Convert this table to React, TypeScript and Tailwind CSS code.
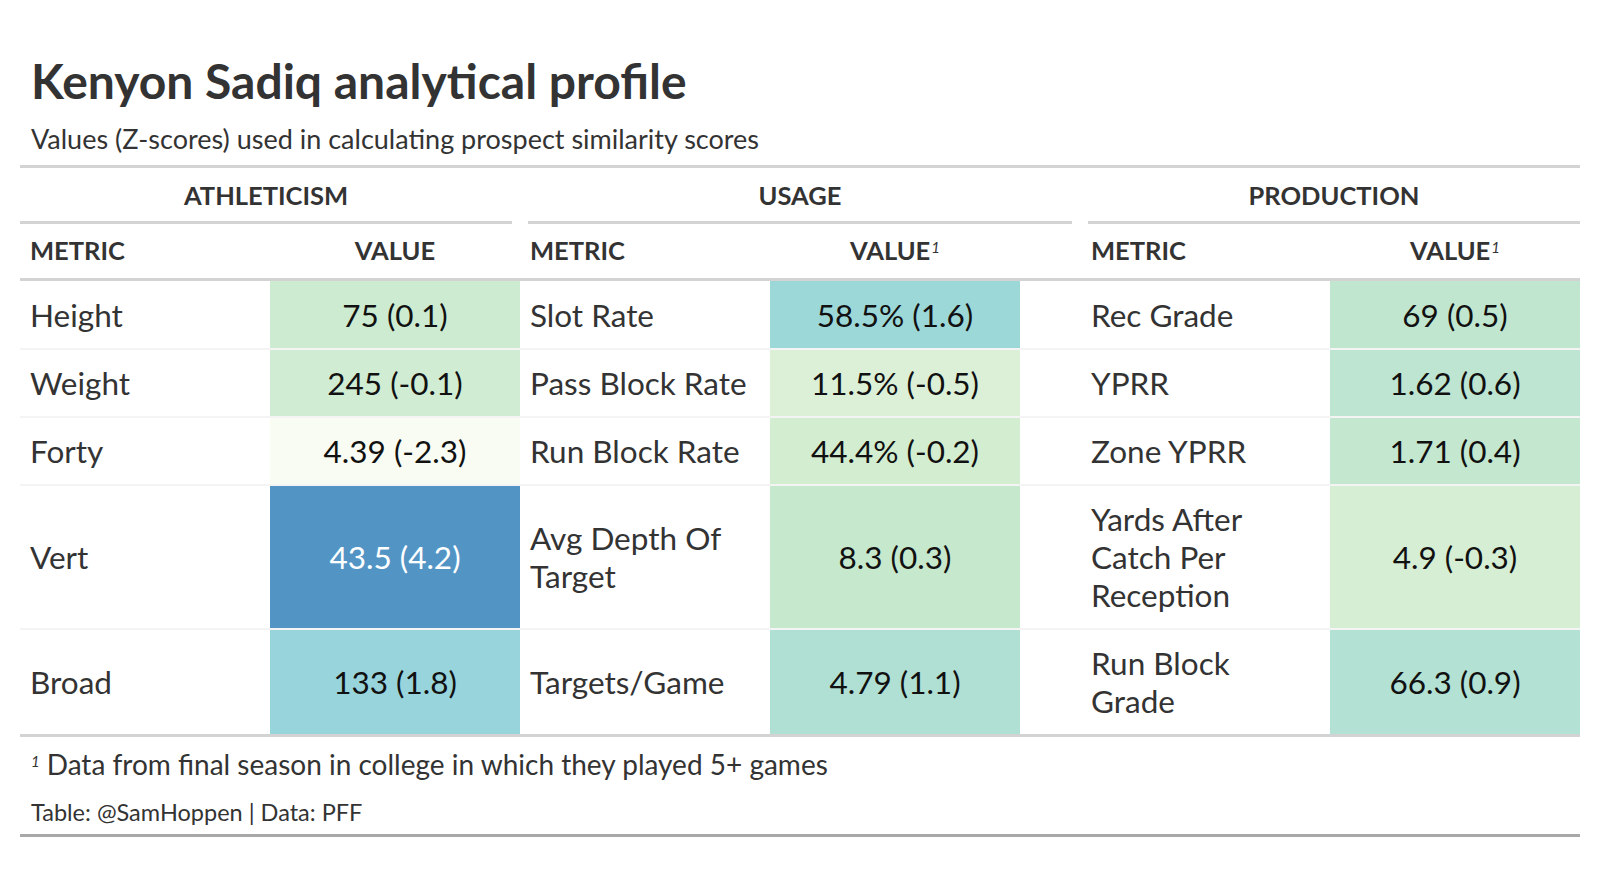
const rows = [
  {
    first: true,
    m1: "Height", v1: "75 (0.1)", c1: "bg-[#cdebd0]",
    m2: "Slot Rate", v2: "58.5% (1.6)", c2: "bg-[#9dd8d8]",
    m3: "Rec Grade", v3: "69 (0.5)", c3: "bg-[#c1e6d0]",
  },
  {
    first: false,
    m1: "Weight", v1: "245 (-0.1)", c1: "bg-[#d0ecd3]",
    m2: "Pass Block Rate", v2: "11.5% (-0.5)", c2: "bg-[#dcf0d8]",
    m3: "YPRR", v3: "1.62 (0.6)", c3: "bg-[#bde5d1]",
  },
  {
    first: false,
    m1: "Forty", v1: "4.39 (-2.3)", c1: "bg-[#f8fcf2]",
    m2: "Run Block Rate", v2: "44.4% (-0.2)", c2: "bg-[#d3edd0]",
    m3: "Zone YPRR", v3: "1.71 (0.4)", c3: "bg-[#c4e7cf]",
  },
  {
    first: false,
    m1: "Vert", v1: "43.5 (4.2)", c1: "bg-[#5295c5] !text-white",
    m2: "Avg Depth Of Target", v2: "8.3 (0.3)", c2: "bg-[#c6e8cd]",
    m3: "Yards After Catch Per Reception", v3: "4.9 (-0.3)", c3: "bg-[#d6eed4]",
  },
  {
    first: false,
    m1: "Broad", v1: "133 (1.8)", c1: "bg-[#98d4dc]",
    m2: "Targets/Game", v2: "4.79 (1.1)", c2: "bg-[#b0e0d3]",
    m3: "Run Block Grade", v3: "66.3 (0.9)", c3: "bg-[#b3e1d3]",
  },
];

function Sup() {
  return <sup className="text-[15px] italic font-normal ml-[1px] relative -top-[7px]">1</sup>;
}

export default function App() {
  const cols = "grid grid-cols-[250px_250px_250px_250px_310px_250px]";
  const valueCell = "px-[10px] flex items-center justify-center text-center text-[#111111]";
  return (
    <div className="w-[1600px] h-[874px] bg-white text-[#333333] font-['Lato','Liberation_Sans',sans-serif]">
      <div className="pt-[52px] px-[20px]">
        <div className="pl-[11px]">
          <h1 className="text-[48px] font-bold leading-[58px]">Kenyon Sadiq analytical profile</h1>
          <p className="text-[27px] leading-[32px] mt-[13px]">Values (Z-scores) used in calculating prospect similarity scores</p>
        </div>

        <div className="mt-[10px] border-t-[3px] border-[#d3d3d3]">
          {/* spanners */}
          <div className="grid grid-cols-[500px_560px_500px] text-[25.5px] font-bold uppercase leading-[28px]">
            <div className="pr-[8px]">
              <div className="text-center pt-[13px] pb-[12px] border-b-[3px] border-[#d3d3d3]">Athleticism</div>
            </div>
            <div className="px-[8px]">
              <div className="text-center pt-[13px] pb-[12px] border-b-[3px] border-[#d3d3d3]">Usage</div>
            </div>
            <div className="pl-[8px]">
              <div className="text-center pt-[13px] pb-[12px] border-b-[3px] border-[#d3d3d3]">Production</div>
            </div>
          </div>

          {/* column labels */}
          <div className={`${cols} text-[25.5px] font-bold uppercase leading-[28px] border-b-[3px] border-[#d3d3d3]`}>
            <div className="px-[10px] pt-[12px] pb-[14px]">Metric</div>
            <div className="px-[10px] pt-[12px] pb-[14px] text-center">Value</div>
            <div className="px-[10px] pt-[12px] pb-[14px]">Metric</div>
            <div className="px-[10px] pt-[12px] pb-[14px] text-center">Value<Sup /></div>
            <div className="pl-[71px] pr-[10px] pt-[12px] pb-[14px]">Metric</div>
            <div className="px-[10px] pt-[12px] pb-[14px] text-center">Value<Sup /></div>
          </div>

          {/* body */}
          {rows.map((r) => {
            const pad = r.first ? "pt-[15px] pb-[14px]" : "py-[14px]";
            return (
              <div key={r.m1} className={`${cols} text-[31.5px] leading-[38px] border-[#f4f4f4] ${r.first ? "" : "border-t-2"}`}>
                <div className={`px-[10px] flex items-center ${pad}`}>{r.m1}</div>
                <div className={`${valueCell} ${r.c1}`}>{r.v1}</div>
                <div className={`px-[10px] flex items-center ${pad}`}>{r.m2}</div>
                <div className={`${valueCell} ${r.c2}`}>{r.v2}</div>
                <div className={`pl-[71px] pr-[10px] flex items-center ${pad}`}>
                  <div className="max-w-[200px]">{r.m3}</div>
                </div>
                <div className={`${valueCell} ${r.c3}`}>{r.v3}</div>
              </div>
            );
          })}
        </div>

        <div className="border-t-[3px] border-[#d3d3d3] border-b-[3px] border-b-[#a8a8a8] pl-[11px] pb-[8px]">
          <p className="text-[28px] leading-[34px] mt-[10px]">
            <sup className="text-[15px] italic relative -top-[8px] mr-[7px]">1</sup>Data from final season in college in which they played 5+ games
          </p>
          <p className="text-[23.5px] leading-[28px] mt-[17px]">Table: @SamHoppen | Data: PFF</p>
        </div>
      </div>
    </div>
  );
}
